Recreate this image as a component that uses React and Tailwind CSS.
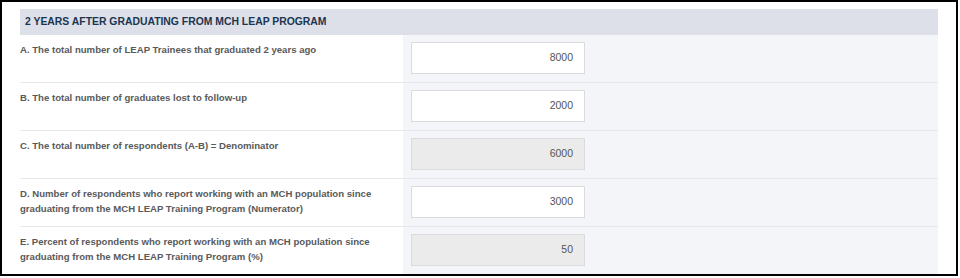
export default function App() {
  const rows = [
    { label: "A. The total number of LEAP Trainees that graduated 2 years ago", value: "8000", ro: false },
    { label: "B. The total number of graduates lost to follow-up", value: "2000", ro: false },
    { label: "C. The total number of respondents (A-B) = Denominator", value: "6000", ro: true },
    { label: "D. Number of respondents who report working with an MCH population since graduating from the MCH LEAP Training Program (Numerator)", value: "3000", ro: false },
    { label: "E. Percent of respondents who report working with an MCH population since graduating from the MCH LEAP Training Program (%)", value: "50", ro: true },
  ];
  return (
    <div className="w-[960px] h-[278px] bg-white" style={{ fontFamily: '"Liberation Sans", Arial, sans-serif' }}>
      <div className="w-[958px] h-[276px] border-2 border-black pt-[7px] pl-[18px] pr-[18px] overflow-hidden">
        <div className="h-[26px] bg-[#dde0e8] flex items-center pl-[5px] text-[10.4px] font-bold text-[#1b3550]">
          2 YEARS AFTER GRADUATING FROM MCH LEAP PROGRAM
        </div>
        {rows.map((r, i) => (
          <div key={i} className="flex h-[48px] border-b border-[#e6e7ea]">
            <div className="w-[383px] pt-[7px] pr-[18px] text-[9.6px] leading-[15px] font-bold text-[#5a5a5a]">
              {r.label}
            </div>
            <div className="flex-1 bg-[#f4f5f9] pt-[7px] pl-[8px]">
              <div
                className={`w-[174px] h-[32px] border border-[#dcdcdc] flex items-center justify-end pr-[11px] text-[10.5px] text-[#555] ${r.ro ? "bg-[#ebebeb]" : "bg-white"}`}
              >
                {r.value}
              </div>
            </div>
          </div>
        ))}
      </div>
    </div>
  );
}
